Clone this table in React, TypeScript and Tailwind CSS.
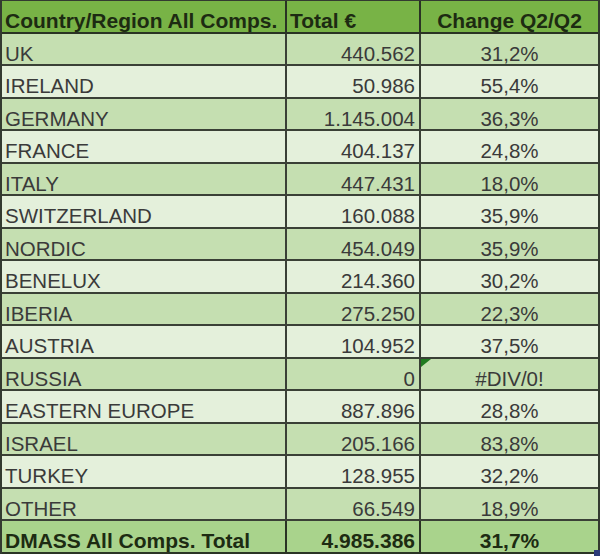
import React from "react";

const rows: [string, string, string][] = [
  ["UK", "440.562", "31,2%"],
  ["IRELAND", "50.986", "55,4%"],
  ["GERMANY", "1.145.004", "36,3%"],
  ["FRANCE", "404.137", "24,8%"],
  ["ITALY", "447.431", "18,0%"],
  ["SWITZERLAND", "160.088", "35,9%"],
  ["NORDIC", "454.049", "35,9%"],
  ["BENELUX", "214.360", "30,2%"],
  ["IBERIA", "275.250", "22,3%"],
  ["AUSTRIA", "104.952", "37,5%"],
  ["RUSSIA", "0", "#DIV/0!"],
  ["EASTERN EUROPE", "887.896", "28,8%"],
  ["ISRAEL", "205.166", "83,8%"],
  ["TURKEY", "128.955", "32,2%"],
  ["OTHER", "66.549", "18,9%"],
];

export default function App() {
  return (
    <div
      className="w-[600px] h-[556px] bg-white overflow-hidden"
      style={{ fontFamily: '"Liberation Sans", Arial, sans-serif' }}
    >
      <div className="w-[600px] border-t border-x-2 border-[#333a30]">
        {/* Header */}
        <div className="flex h-[32.5px] border-b-2 border-[#2a3324] bg-[#78b346] text-[21px] font-bold text-[#1d2b12] leading-[26px]">
          <div className="w-[285px] pl-[3px] pt-[7px] border-r-2 border-[#2a3324] whitespace-nowrap">
            Country/Region All Comps.
          </div>
          <div className="w-[134px] pl-[3px] pt-[7px] border-r-2 border-[#2a3324] whitespace-nowrap">
            Total €
          </div>
          <div className="flex-1 text-center pt-[7px] whitespace-nowrap">Change Q2/Q2</div>
        </div>

        {rows.map(([name, total, change], i) => (
          <div
            key={name}
            className={`flex h-[32.5px] border-b-2 border-[#3a4036] text-[20.5px] text-[#3a3a3a] leading-[26px] ${
              i % 2 === 0 ? "bg-[#c5dfb1]" : "bg-[#e4f0db]"
            }`}
          >
            <div className="w-[285px] pl-[3px] pt-[7px] border-r-2 border-[#3a4036] whitespace-nowrap">
              {name}
            </div>
            <div className="w-[134px] pr-[4px] pt-[7px] text-right border-r-2 border-[#3a4036] whitespace-nowrap">
              {total}
            </div>
            <div className="relative flex-1 text-center pt-[7px] whitespace-nowrap">
              {change === "#DIV/0!" && (
                <svg className="absolute left-0 top-0" width="10" height="8" viewBox="0 0 10 8">
                  <polygon points="0,0 10,0 0,8" fill="#1f7a1f" />
                </svg>
              )}
              {change}
            </div>
          </div>
        ))}

        {/* Total */}
        <div className="relative flex h-[32.5px] border-b-2 border-[#2a3324] bg-[#a9d38c] text-[21px] font-bold text-[#1d2b12] leading-[26px]">
          <div className="w-[285px] pl-[3px] pt-[7px] border-r-2 border-[#2a3324] whitespace-nowrap">
            DMASS All Comps. Total
          </div>
          <div className="w-[134px] pr-[4px] pt-[7px] text-right border-r-2 border-[#2a3324] whitespace-nowrap">
            4.985.386
          </div>
          <div className="flex-1 text-center pt-[7px] whitespace-nowrap">31,7%</div>
          <div className="absolute right-[-2px] bottom-[-4px] w-[6px] h-[6px] bg-[#2b3a78]" />
        </div>
      </div>
    </div>
  );
}
